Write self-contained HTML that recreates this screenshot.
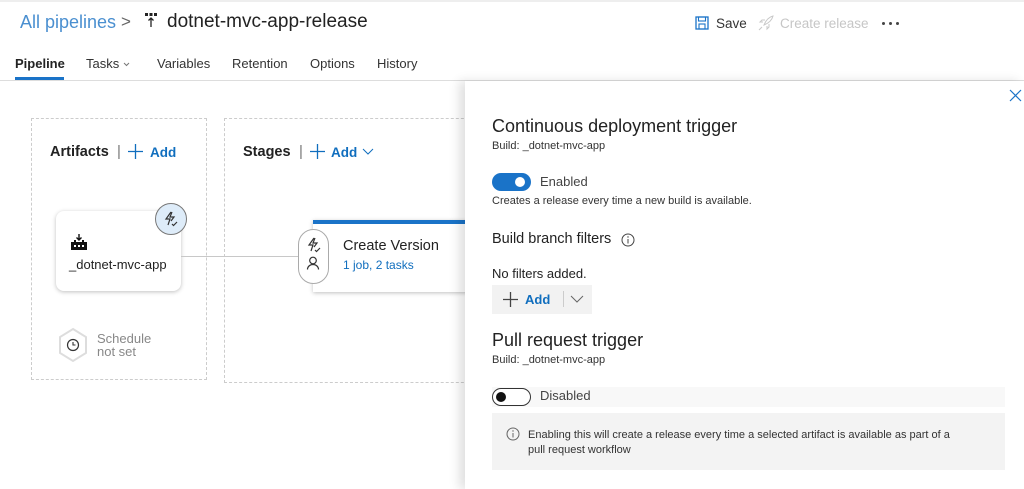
<!DOCTYPE html>
<html><head><meta charset="utf-8"><style>
*{margin:0;padding:0;box-sizing:border-box}
body{width:1024px;height:489px;overflow:hidden;background:#fff;font-family:"Liberation Sans",sans-serif;color:#222;position:relative}
.a{position:absolute;white-space:nowrap}
.blue{color:#106ebe}
</style></head><body>
<div class="a" style="left:0;top:0;width:1024px;height:2px;background:#eee"></div>
<div class="a" style="left:20px;top:12px;font-size:18px;color:#4a8fd0">All pipelines</div>
<div class="a" style="left:121px;top:12px;font-size:17px;color:#666">&gt;</div>
<svg class="a" style="left:144px;top:12px" width="14" height="16" viewBox="0 0 14 16"><rect x="1" y="1" width="3" height="3" fill="#222"/><rect x="5.5" y="1" width="3" height="3" fill="#222"/><rect x="10" y="1" width="3" height="3" fill="#222"/><path d="M7 15V6M4.5 8.5L7 6l2.5 2.5" stroke="#222" stroke-width="1.3" fill="none"/></svg>
<div class="a" style="left:167px;top:11px;font-size:19px;color:#222">dotnet-mvc-app-release</div>
<svg class="a" style="left:695px;top:16px" width="14" height="14" viewBox="0 0 14 14"><rect x="1" y="1" width="12" height="12" fill="none" stroke="#1a73c8" stroke-width="1.3"/><rect x="3.5" y="1" width="7" height="4" fill="none" stroke="#1a73c8" stroke-width="1.1"/><rect x="4" y="8" width="6" height="5" fill="none" stroke="#1a73c8" stroke-width="1.1"/></svg>
<div class="a" style="left:716px;top:16px;font-size:13.5px;color:#333">Save</div>
<svg class="a" style="left:758px;top:15px" width="16" height="16" viewBox="0 0 16 16"><path d="M6 10C8 5 11 2 15 1C14 5 11 8 6 10ZM5 7L2 7L4 5L7 5M9 11L9 14L11 12L11 9M4 12L1 15" stroke="#c8c8c8" stroke-width="1" fill="none"/></svg>
<div class="a" style="left:780px;top:16px;font-size:13.5px;color:#c6c6c6">Create release</div>
<div class="a" style="left:882px;top:22px;width:3px;height:3px;border-radius:50%;background:#444;box-shadow:7px 0 #444,14px 0 #444"></div>
<div class="a" style="left:15px;top:56px;font-size:13px;font-weight:bold;color:#222">Pipeline</div>
<div class="a" style="left:15px;top:77px;width:49px;height:3px;background:#1a73c8"></div>
<div class="a" style="left:86px;top:56px;font-size:13px;color:#333">Tasks</div>
<svg class="a" style="left:123px;top:62px" width="7" height="5"><path d="M1 1l2.5 2.5L6 1" stroke="#777" fill="none"/></svg>
<div class="a" style="left:157px;top:56px;font-size:13px;color:#333">Variables</div>
<div class="a" style="left:232px;top:56px;font-size:13px;color:#333">Retention</div>
<div class="a" style="left:310px;top:56px;font-size:13px;color:#333">Options</div>
<div class="a" style="left:377px;top:56px;font-size:13px;color:#333">History</div>
<div class="a" style="left:0;top:80px;width:1024px;height:1px;background:#ddd"></div>

<div class="a" style="left:31px;top:118px;width:176px;height:262px;border:1px dashed #ccc"></div>
<div class="a" style="left:224px;top:118px;width:260px;height:265px;border:1px dashed #ccc"></div>
<div class="a" style="left:50px;top:144px;font-size:14.5px;font-weight:bold;color:#222">Artifacts</div>
<div class="a" style="left:117px;top:143px;font-size:15px;color:#777">|</div>
<svg class="a" style="left:128px;top:144px" width="15" height="15"><path d="M7.5 0v15M0 7.5h15" stroke="#106ebe" stroke-width="1.3"/></svg>
<div class="a blue" style="left:150px;top:145px;font-size:13.5px;font-weight:bold">Add</div>
<div class="a" style="left:243px;top:144px;font-size:14.5px;font-weight:bold;color:#222">Stages</div>
<div class="a" style="left:299px;top:143px;font-size:15px;color:#777">|</div>
<svg class="a" style="left:310px;top:144px" width="15" height="15"><path d="M7.5 0v15M0 7.5h15" stroke="#106ebe" stroke-width="1.3"/></svg>
<div class="a blue" style="left:331px;top:145px;font-size:13.5px;font-weight:bold">Add</div>
<svg class="a" style="left:362px;top:148px" width="12" height="8"><path d="M1 1l5 5 5-5" stroke="#106ebe" fill="none"/></svg>

<div class="a" style="left:56px;top:211px;width:125px;height:80px;background:#fff;border-radius:8px;box-shadow:0 1px 4px rgba(0,0,0,.25)"></div>
<svg class="a" style="left:70px;top:233px" width="18" height="18" viewBox="0 0 18 18"><path d="M9 1v6M6.5 4.5L9 7l2.5-2.5" stroke="#111" stroke-width="1.4" fill="none"/><path d="M1 17V9h3v-2h2v2h6v-2h2v2h3v8z" fill="#111"/><rect x="4" y="12" width="2" height="2" fill="#fff"/><rect x="8" y="12" width="2" height="2" fill="#fff"/><rect x="12" y="12" width="2" height="2" fill="#fff"/></svg>
<div class="a" style="left:69px;top:257px;font-size:13px;color:#222">_dotnet-mvc-app</div>
<div class="a" style="left:155px;top:203px;width:32px;height:32px;border-radius:50%;background:#deecf9;border:1px solid #777"></div>
<svg class="a" style="left:163px;top:211px" width="16" height="16" viewBox="0 0 16 16"><path d="M8 1L3 8h4l-2 6M9 1L7 6h4L8 10" stroke="#333" stroke-width="1.2" fill="none"/><path d="M9 13l1.5 1.5L14 11" stroke="#333" stroke-width="1.2" fill="none"/></svg>
<div class="a" style="left:181px;top:256px;width:117px;height:1px;background:#c8c8c8"></div>
<svg class="a" style="left:57px;top:327px" width="32" height="36" viewBox="0 0 32 36"><path d="M16 2l13 8v16l-13 8-13-8V10z" fill="#fff" stroke="#ddd" stroke-width="2"/><circle cx="16" cy="18" r="5.5" fill="none" stroke="#333" stroke-width="1.2"/><path d="M16 15v3h2.5" stroke="#333" fill="none" stroke-width="1.1"/></svg>
<div class="a" style="left:97px;top:332px;font-size:13px;color:#888;line-height:13px">Schedule<br>not set</div>

<div class="a" style="left:313px;top:220px;width:160px;height:72px;background:#fff;box-shadow:0 1px 4px rgba(0,0,0,.25);border-top:4px solid #1a73c8"></div>
<div class="a" style="left:298px;top:229px;width:31px;height:55px;border-radius:16px;background:#fff;border:1px solid #aaa"></div>
<svg class="a" style="left:306px;top:237px" width="16" height="16" viewBox="0 0 16 16"><path d="M8 1L3 8h4l-2 6M9 1L7 6h4L8 10" stroke="#333" stroke-width="1.2" fill="none"/><path d="M9 13l1.5 1.5L14 11" stroke="#333" stroke-width="1.2" fill="none"/></svg>
<svg class="a" style="left:306px;top:256px" width="14" height="14" viewBox="0 0 14 14"><circle cx="7" cy="4.5" r="3.3" fill="none" stroke="#333" stroke-width="1.2"/><path d="M1.5 13.5c0-3 2.5-5 5.5-5s5.5 2 5.5 5" fill="none" stroke="#333" stroke-width="1.2"/></svg>
<div class="a" style="left:343px;top:238px;font-size:14.5px;color:#222">Create Version</div>
<div class="a blue" style="left:343px;top:258px;font-size:12px">1 job, 2 tasks</div>

<div class="a" style="left:465px;top:81px;width:559px;height:408px;background:#fff;box-shadow:-6px 0 10px rgba(0,0,0,.12)"></div>
<svg class="a" style="left:1009px;top:89px" width="13" height="13"><path d="M1 1l11 11M12 1L1 12" stroke="#1a73c8" stroke-width="1.2"/></svg>
<div class="a" style="left:492px;top:116px;font-size:18px;color:#222">Continuous deployment trigger</div>
<div class="a" style="left:492px;top:140px;font-size:11px;color:#333">Build: _dotnet-mvc-app</div>
<div class="a" style="left:492px;top:173px;width:39px;height:18px;border-radius:9px;background:#1a73c8"></div>
<div class="a" style="left:515px;top:177px;width:10px;height:10px;border-radius:50%;background:#fff"></div>
<div class="a" style="left:540px;top:174px;font-size:13px;color:#444">Enabled</div>
<div class="a" style="left:492px;top:195px;font-size:11px;color:#333">Creates a release every time a new build is available.</div>
<div class="a" style="left:492px;top:231px;font-size:14.5px;color:#222">Build branch filters</div>
<svg class="a" style="left:621px;top:233px" width="14" height="14"><circle cx="7" cy="7" r="6" fill="none" stroke="#444"/><path d="M7 6v4.5" stroke="#444"/><circle cx="7" cy="4" r=".7" fill="#444"/></svg>
<div class="a" style="left:492px;top:266px;font-size:13px;color:#222">No filters added.</div>
<div class="a" style="left:492px;top:285px;width:100px;height:29px;background:#f2f2f2"></div>
<svg class="a" style="left:503px;top:292px" width="15" height="15"><path d="M7.5 0v15M0 7.5h15" stroke="#444" stroke-width="1.3"/></svg>
<div class="a blue" style="left:525px;top:292px;font-size:13px;font-weight:bold">Add</div>
<div class="a" style="left:563px;top:291px;width:1px;height:16px;background:#ccc"></div>
<svg class="a" style="left:570px;top:295px" width="14" height="8"><path d="M1 1l6 6 6-6" stroke="#666" fill="none"/></svg>
<div class="a" style="left:492px;top:330px;font-size:18px;color:#222">Pull request trigger</div>
<div class="a" style="left:492px;top:354px;font-size:11px;color:#333">Build: _dotnet-mvc-app</div>
<div class="a" style="left:492px;top:387px;width:513px;height:20px;background:#f8f8f8"></div>
<div class="a" style="left:492px;top:388px;width:39px;height:18px;border-radius:9px;background:#fff;border:1px solid #333"></div>
<div class="a" style="left:496px;top:392px;width:10px;height:10px;border-radius:50%;background:#111"></div>
<div class="a" style="left:540px;top:388px;font-size:13px;color:#444">Disabled</div>
<div class="a" style="left:492px;top:413px;width:513px;height:57px;background:#f3f3f3"></div>
<svg class="a" style="left:506px;top:427px" width="14" height="14"><circle cx="7" cy="7" r="6" fill="none" stroke="#666"/><path d="M7 6v4.5" stroke="#666"/><circle cx="7" cy="4" r=".7" fill="#666"/></svg>
<div class="a" style="left:528px;top:428px;font-size:11px;color:#333;line-height:15px">Enabling this will create a release every time a selected artifact is available as part of a<br>pull request workflow</div>
</body></html>
